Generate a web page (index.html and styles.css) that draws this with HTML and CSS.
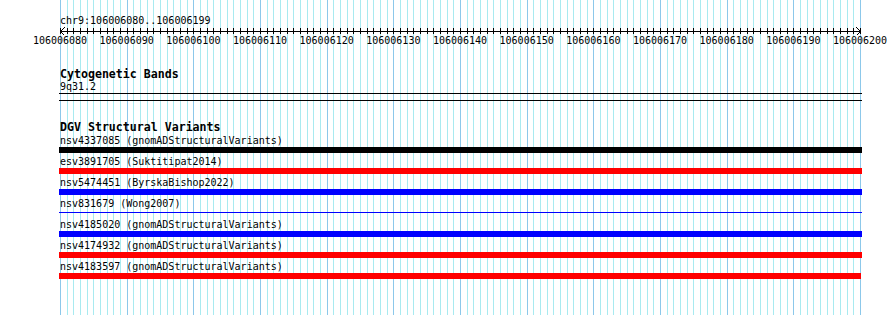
FILE: index.html
```html
<!DOCTYPE html>
<html>
<head>
<meta charset="utf-8">
<title>Genome browser</title>
<link rel="stylesheet" href="styles.css">
</head>
<body>
<div class="view">
  <svg class="grid" width="890" height="315" viewBox="0 0 890 315" shape-rendering="crispEdges">
    <defs>
      <pattern id="minor" x="60" y="0" width="20" height="315" patternUnits="userSpaceOnUse">
        <rect x="0" y="0" width="1" height="315" class="minor-line"/>
        <rect x="7" y="0" width="1" height="315" class="minor-line"/>
        <rect x="13" y="0" width="1" height="315" class="minor-line"/>
      </pattern>
    </defs>
    <rect x="60" y="0" width="801" height="315" fill="url(#minor)"/>
    <g class="major-line">
      <rect x="60" y="0" width="1" height="315"/>
      <rect x="127" y="0" width="1" height="315"/>
      <rect x="193" y="0" width="1" height="315"/>
      <rect x="260" y="0" width="1" height="315"/>
      <rect x="327" y="0" width="1" height="315"/>
      <rect x="393" y="0" width="1" height="315"/>
      <rect x="460" y="0" width="1" height="315"/>
      <rect x="527" y="0" width="1" height="315"/>
      <rect x="593" y="0" width="1" height="315"/>
      <rect x="660" y="0" width="1" height="315"/>
      <rect x="727" y="0" width="1" height="315"/>
      <rect x="793" y="0" width="1" height="315"/>
      <rect x="860" y="0" width="1" height="315"/>
    </g>
  </svg>

  <div class="main">
    <svg class="ruler" width="890" height="50" viewBox="0 0 890 50" shape-rendering="crispEdges">
      <defs>
        <pattern id="ticks" x="60" y="0" width="20" height="50" patternUnits="userSpaceOnUse">
          <rect x="0" y="28" width="1" height="6" fill="#000"/>
          <rect x="7" y="28" width="1" height="6" fill="#000"/>
          <rect x="13" y="28" width="1" height="6" fill="#000"/>
        </pattern>
      </defs>
      <text class="loc" x="60" y="24">chr9:106006080..106006199</text>
      <rect x="60" y="0" width="801" height="50" fill="url(#ticks)"/>
      <rect x="60" y="31" width="801" height="1" fill="#000"/>
      <polyline points="64.5,27.5 60.5,31.5 64.5,35.5" class="arrow"/>
      <polyline points="856.5,27.5 860.5,31.5 856.5,35.5" class="arrow"/>
      <g class="ticklabels">
        <text x="60" y="44">106006080</text>
        <text x="126.67" y="44">106006090</text>
        <text x="193.33" y="44">106006100</text>
        <text x="260" y="44">106006110</text>
        <text x="326.67" y="44">106006120</text>
        <text x="393.33" y="44">106006130</text>
        <text x="460" y="44">106006140</text>
        <text x="526.67" y="44">106006150</text>
        <text x="593.33" y="44">106006160</text>
        <text x="660" y="44">106006170</text>
        <text x="726.67" y="44">106006180</text>
        <text x="793.33" y="44">106006190</text>
        <text x="860" y="44">106006200</text>
      </g>
    </svg>

    <section class="track cyto">
      <div class="track-title">Cytogenetic Bands</div>
      <div class="feat-label">9q31.2</div>
      <div class="band"></div>
    </section>

    <section class="track dgv">
      <div class="track-title">DGV Structural Variants</div>
      <div class="feature">
        <div class="feat-label">nsv4337085 (gnomADStructuralVariants)</div>
        <div class="bar black"></div>
      </div>
      <div class="feature">
        <div class="feat-label">esv3891705 (Suktitipat2014)</div>
        <div class="bar red"></div>
      </div>
      <div class="feature">
        <div class="feat-label">nsv5474451 (ByrskaBishop2022)</div>
        <div class="bar blue"></div>
      </div>
      <div class="feature">
        <div class="feat-label">nsv831679 (Wong2007)</div>
        <div class="bar blue thin"></div>
      </div>
      <div class="feature">
        <div class="feat-label">nsv4185020 (gnomADStructuralVariants)</div>
        <div class="bar blue"></div>
      </div>
      <div class="feature">
        <div class="feat-label">nsv4174932 (gnomADStructuralVariants)</div>
        <div class="bar red"></div>
      </div>
      <div class="feature">
        <div class="feat-label">nsv4183597 (gnomADStructuralVariants)</div>
        <div class="bar red short"></div>
      </div>
    </section>
  </div>
</div>
</body>
</html>
```

FILE: styles.css
```css
html, body {
  margin: 0;
  padding: 0;
  background: #fff;
}

.view {
  position: relative;
  width: 890px;
  height: 315px;
  overflow: hidden;
  font-family: "DejaVu Sans Mono", "Liberation Mono", monospace;
  color: #000;
}

.grid {
  position: absolute;
  top: 0;
  left: 0;
  z-index: 0;
}

.minor-line {
  fill: #a8eaf0;
}

.major-line rect {
  fill: #8cc8ea;
}

.main {
  position: relative;
  z-index: 1;
}

.ruler {
  display: block;
}

.ruler text {
  font-family: "DejaVu Sans Mono", "Liberation Mono", monospace;
  font-size: 10px;
  fill: #000;
}

.ticklabels text {
  text-anchor: middle;
}

.arrow {
  fill: none;
  stroke: #000;
  stroke-width: 1;
}

.track {
  padding-left: 59px;
  width: 803px;
}

.track-title {
  font-weight: bold;
  font-size: 11.6px;
  line-height: 13px;
  height: 13px;
  white-space: nowrap;
  padding-left: 1px;
}

.feat-label {
  font-size: 10px;
  line-height: 12px;
  height: 12px;
  white-space: nowrap;
  padding-left: 1px;
}

.cyto .track-title {
  margin-top: 18px;
}

.band {
  height: 6px;
  border-top: 1px solid #000;
  border-bottom: 1px solid #000;
}

.dgv .track-title {
  margin-top: 20px;
  margin-bottom: 1px;
}

.feature {
  padding-bottom: 3px;
}

.bar {
  height: 6px;
}

.bar.thin {
  height: 1px;
  margin: 2px 0 3px;
}

.bar.short {
  width: 802px;
}

.black { background: #000; }
.red { background: #ff0000; }
.blue { background: #0000ff; }
```
